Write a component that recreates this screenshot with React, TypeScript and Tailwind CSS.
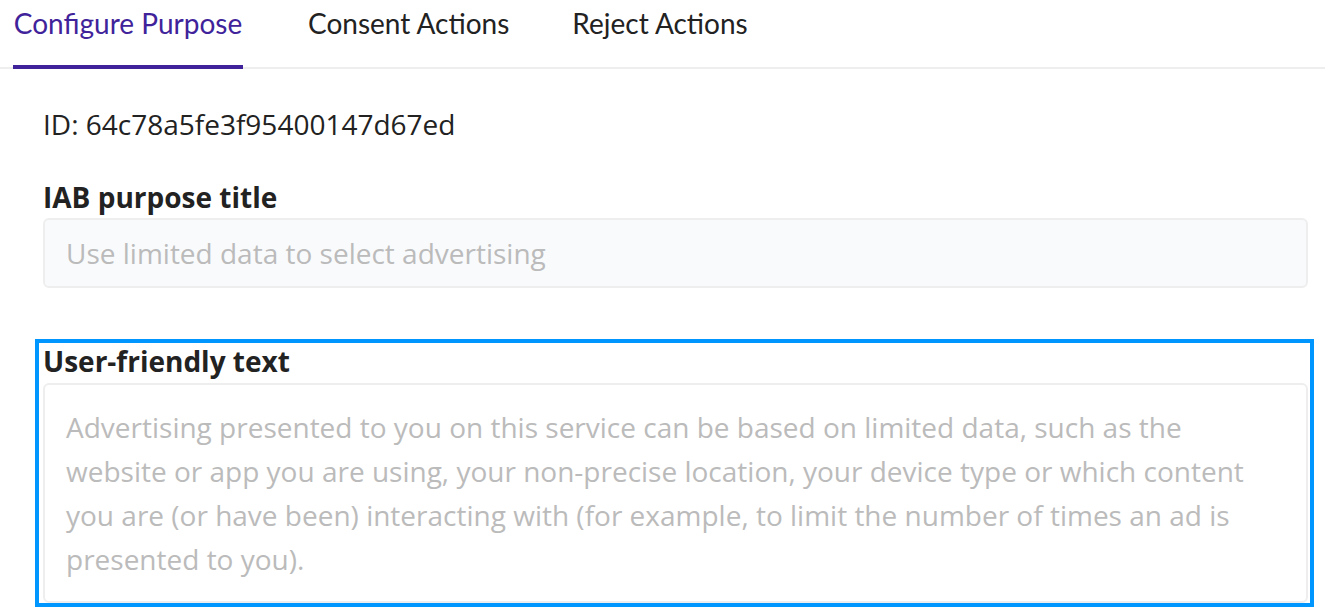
import React from "react";

export default function App() {
  return (
    <div className="w-[1325px] h-[614px] bg-white overflow-hidden">
      <div className="flex pl-[13px] border-b-2 border-[#eeeeee] h-[69px]" style={{ fontFamily: "Lato, 'Open Sans', sans-serif" }}>
        <div className="relative pt-[9px] leading-[28px] w-[230px] text-center text-[28px] text-[#40239a] whitespace-nowrap">
          Configure Purpose
          <div className="absolute left-0 right-0 bottom-[-2px] h-[4px] bg-[#40239a]" />
        </div>
        <div className="pt-[9px] leading-[28px] ml-[65px] text-[28px] text-[#222] whitespace-nowrap">Consent Actions</div>
        <div className="pt-[9px] leading-[28px] ml-[63px] text-[28px] text-[#222] whitespace-nowrap">Reject Actions</div>
      </div>
      <div className="pl-[43px] pr-[17px]" style={{ fontFamily: "'Open Sans', sans-serif" }}>
        <div className="pt-[37px] text-[28px] text-[#222] leading-[36px]">ID: 64c78a5fe3f95400147d67ed</div>
        <div className="mt-[40px] text-[28px] font-bold text-[#222] leading-[30px]">IAB purpose title</div>
        <div className="mt-[6px] h-[70px] border-2 border-[#eeeeee] bg-[#f9fafb] rounded-[6px] flex items-center px-[21px] text-[28px] text-[#bbbbbb]">
          Use limited data to select advertising
        </div>
      </div>
      <div className="mt-[51px] ml-[35px] w-[1279px] h-[268px] border-[4px] border-[#0096ff] pl-[4px] pr-[2px]" style={{ fontFamily: "'Open Sans', sans-serif" }}>
        <div className="pt-[3px] text-[28px] font-bold text-[#222] leading-[30px]">User-friendly text</div>
        <div className="mt-[7px] border-2 border-[#eeeeee] rounded-[6px] h-[220px] pl-[21px] pr-[30px] pt-[20px] text-[28px] leading-[44px] text-[#bbbbbb]">
          Advertising presented to you on this service can be based on limited data, such as the website or app you are using, your non-precise location, your device type or which content you are (or have been) interacting with (for example, to limit the number of times an ad is presented to you).
        </div>
      </div>
    </div>
  );
}
